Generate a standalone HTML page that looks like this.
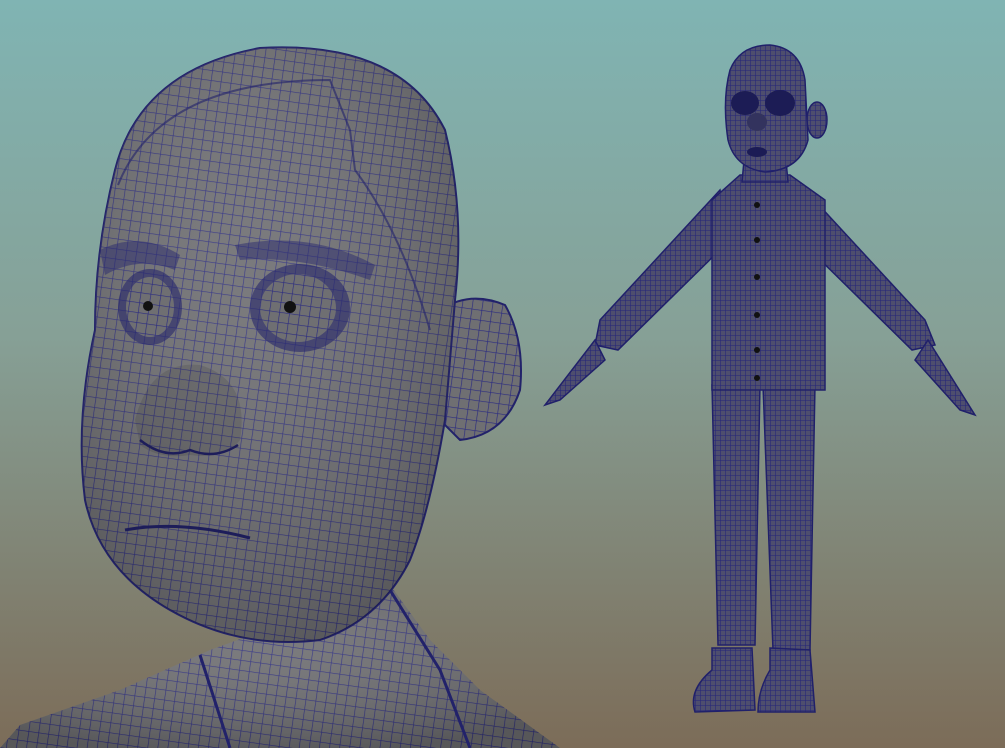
<!DOCTYPE html>
<html><head><style>html,body{margin:0;padding:0;overflow:hidden}svg{display:block}</style></head><body>
<svg width="1005" height="748" viewBox="0 0 1005 748" xmlns="http://www.w3.org/2000/svg">
<defs>
<linearGradient id="bg" x1="0" y1="0" x2="0" y2="1">
<stop offset="0" stop-color="#80b4b3"/>
<stop offset="0.45" stop-color="#86a096"/>
<stop offset="1" stop-color="#7c6c58"/>
</linearGradient>
<pattern id="m" width="10" height="10" patternUnits="userSpaceOnUse" patternTransform="rotate(8)">
<rect width="10" height="10" fill="#6f6f72"/>
<path d="M0 0H10M0 0V10" stroke="#2b2b80" stroke-width="1.3" fill="none"/>
</pattern>
<pattern id="s" width="5" height="5" patternUnits="userSpaceOnUse">
<rect width="5" height="5" fill="#4e4e6e"/>
<path d="M0 0H5M0 0V5" stroke="#24247a" stroke-width="1.1" fill="none"/>
</pattern>
<radialGradient id="sh" cx="0.45" cy="0.35" r="0.7">
<stop offset="0" stop-color="#fff" stop-opacity="0.08"/>
<stop offset="1" stop-color="#000" stop-opacity="0.22"/>
</radialGradient>
</defs>
<rect width="1005" height="748" fill="url(#bg)"/>
<!-- shirt -->
<path d="M0 748 L20 725 L120 690 L210 650 L390 585 L430 640 L480 690 L560 748 Z" fill="url(#m)"/>
<path d="M0 748 L20 725 L120 690 L210 650 L390 585 L430 640 L480 690 L560 748 Z" fill="url(#sh)"/>
<path d="M200 655 L230 748 M390 590 L440 670 L470 748" stroke="#22226a" stroke-width="3" fill="none"/>
<!-- ear -->
<path d="M440 310 Q470 290 505 305 Q525 340 520 390 Q505 435 460 440 L440 420 Z" fill="url(#m)" stroke="#22226a" stroke-width="2"/>
<!-- head -->
<path d="M115 170 Q140 70 260 48 Q400 40 445 130 Q465 210 455 300 L445 420 Q430 510 410 560 Q380 620 320 640 Q240 650 170 610 Q100 570 85 500 Q75 420 95 330 Q95 250 115 170 Z" fill="url(#m)" stroke="#22226a" stroke-width="2"/>
<path d="M115 170 Q140 70 260 48 Q400 40 445 130 Q465 210 455 300 L445 420 Q430 510 410 560 Q380 620 320 640 Q240 650 170 610 Q100 570 85 500 Q75 420 95 330 Q95 250 115 170 Z" fill="url(#sh)"/>
<path d="M118 185 Q160 80 330 80 L350 130 L355 170 Q400 230 430 330" stroke="#22226a" stroke-width="2" fill="none" opacity="0.6"/>
<!-- brows -->
<path d="M100 250 Q140 230 180 255 L175 270 Q140 255 105 275 Z" fill="#2a2a6e" opacity="0.5"/>
<path d="M235 245 Q310 230 375 265 L370 280 Q300 255 240 260 Z" fill="#2a2a6e" opacity="0.5"/>
<!-- eyes -->
<ellipse cx="150" cy="307" rx="32" ry="38" fill="#27276a" opacity="0.6"/>
<ellipse cx="150" cy="307" rx="24" ry="30" fill="url(#m)"/>
<circle cx="148" cy="306" r="5" fill="#111"/>
<ellipse cx="300" cy="308" rx="50" ry="44" fill="#27276a" opacity="0.6"/>
<ellipse cx="298" cy="308" rx="38" ry="34" fill="url(#m)"/>
<circle cx="290" cy="307" r="6" fill="#111"/>
<!-- nose -->
<path d="M135 420 Q150 360 200 365 Q250 380 240 440 Q225 460 190 455 Q160 460 140 445 Z" fill="#000" opacity="0.1"/>
<path d="M140 440 Q165 460 190 450 Q215 460 238 445" stroke="#1d1d5a" stroke-width="2.5" fill="none"/>
<path d="M125 530 Q180 520 250 538" stroke="#1d1d5a" stroke-width="3" fill="none"/>
<!-- full body figure -->
<g stroke="#20206a" stroke-width="1.5">
<path d="M720 190 L600 320 L595 345 L618 350 L730 240 Z" fill="url(#s)"/>
<path d="M805 190 L925 320 L935 345 L912 350 L800 240 Z" fill="url(#s)"/>
<path d="M595 340 L545 405 L560 400 L605 360 Z" fill="url(#s)"/>
<path d="M928 340 L975 415 L960 410 L915 360 Z" fill="url(#s)"/>
<path d="M712 385 L760 385 L755 645 L718 645 Z" fill="url(#s)"/>
<path d="M763 385 L815 385 L810 650 L773 650 Z" fill="url(#s)"/>
<path d="M712 648 L752 648 L755 710 L695 712 Q688 690 712 670 Z" fill="url(#s)"/>
<path d="M770 648 L810 650 L815 712 L758 712 Q758 690 770 670 Z" fill="url(#s)"/>
<path d="M740 175 L790 175 L825 200 L825 390 L712 390 L712 200 Z" fill="url(#s)"/>
<path d="M745 150 L785 150 L788 182 L742 182 Z" fill="url(#s)"/>
<ellipse cx="817" cy="120" rx="10" ry="18" fill="url(#s)"/>
<path d="M730 70 Q740 45 770 45 Q800 48 805 80 L808 140 Q800 170 765 172 Q735 168 728 140 Q722 100 730 70 Z" fill="url(#s)"/>
</g>
<ellipse cx="745" cy="103" rx="14" ry="12" fill="#1c1c55"/>
<ellipse cx="780" cy="103" rx="15" ry="13" fill="#1c1c55"/>
<ellipse cx="757" cy="122" rx="10" ry="9" fill="#33335e"/>
<ellipse cx="757" cy="152" rx="10" ry="5" fill="#1c1c55"/>
<g fill="#111">
<circle cx="757" cy="205" r="3"/><circle cx="757" cy="240" r="3"/><circle cx="757" cy="277" r="3"/><circle cx="757" cy="315" r="3"/><circle cx="757" cy="350" r="3"/><circle cx="757" cy="378" r="3"/>
</g>
</svg>
</body></html>
